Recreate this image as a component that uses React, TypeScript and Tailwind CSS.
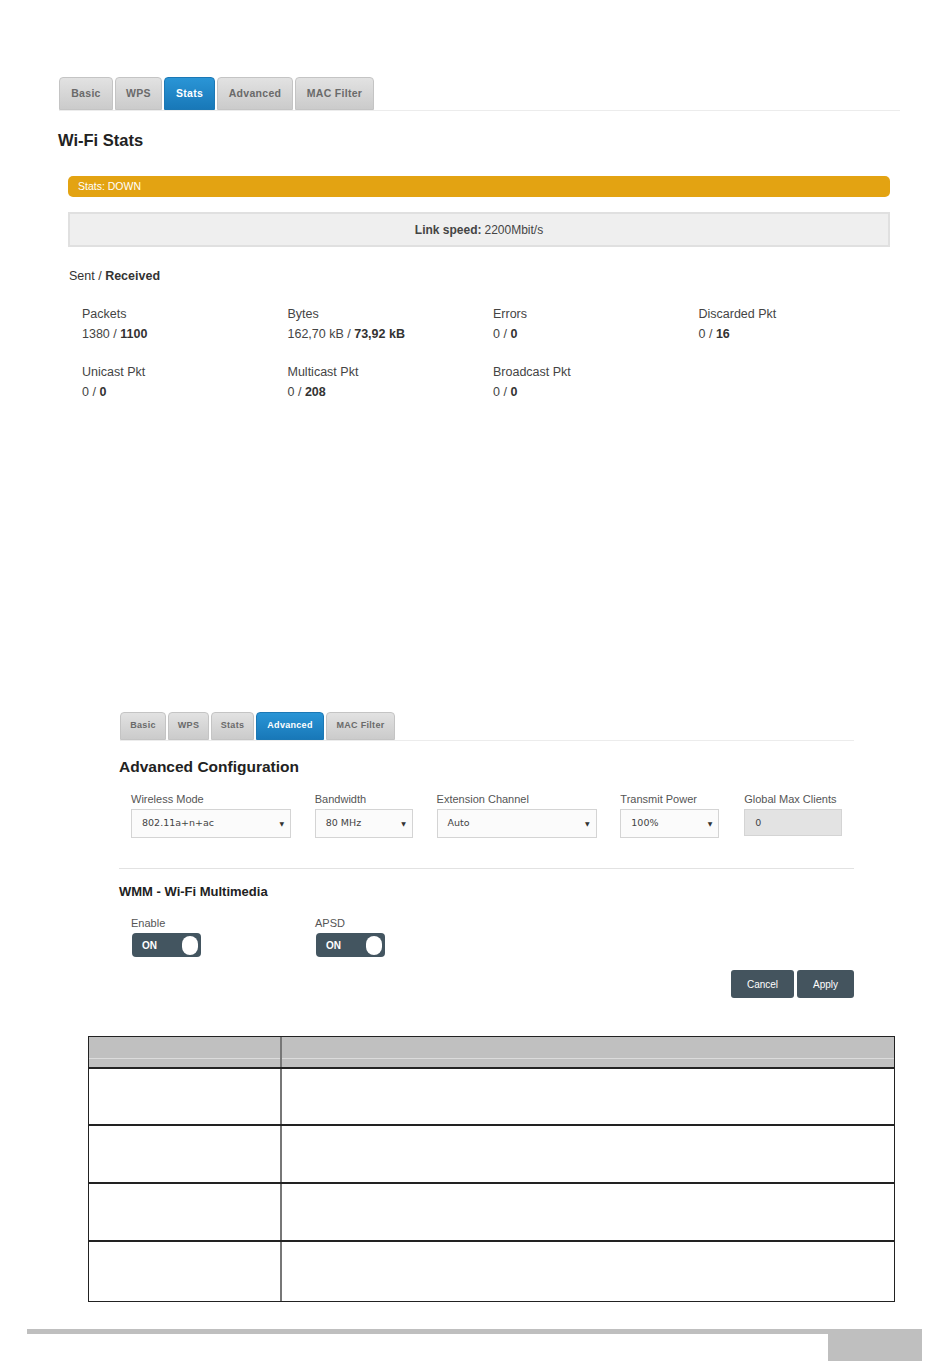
import React from "react";

const font = { fontFamily: '"Liberation Sans", Arial, sans-serif' };

function Tab({ label, active, w, h, size }: { label: string; active?: boolean; w: number; h: string; size: string }) {
  return (
    <div
      style={{ width: w }}
      className={`${h} ${size} flex items-center justify-center rounded-t-[4px] border font-bold tracking-[0.3px] ${
        active
          ? "border-[#1b78b5] bg-gradient-to-b from-[#2a95d6] to-[#1878b8] text-white"
          : "border-[#c4c4c4] bg-gradient-to-b from-[#e2e2e2] to-[#cbcbcb] text-[#6a6a6a]"
      }`}
    >
      {label}
    </div>
  );
}

function Stat({ label, a, b }: { label: string; a: string; b: string }) {
  return (
    <div>
      <div className="h-[14px] text-[12.5px] leading-[14px] text-[#444]">{label}</div>
      <div className="mt-[6px] h-[14px] text-[12.5px] leading-[14px] text-[#444]">
        {a} / <span className="font-bold text-[#333]">{b}</span>
      </div>
    </div>
  );
}

function Select({ value, w, disabled }: { value: string; w: number; disabled?: boolean }) {
  return (
    <div
      style={{ width: w, fontFamily: '"DejaVu Sans", Verdana, sans-serif' }}
      className={`flex justify-between border border-[#d4d4d4] pl-[10px] pr-[6px] text-[9.5px] text-[#444] ${
        disabled ? "bg-[#e3e3e3] h-[27px] items-start pt-[6px]" : "bg-[#fbfbfb] h-[29px] items-center"
      }`}
    >
      <span>{value}</span>
      {!disabled && <span className="text-[6px] text-[#333]">▼</span>}
    </div>
  );
}

function Toggle() {
  return (
    <div className="mt-[4px] ml-px w-[69px] h-[24px] rounded-[4px] bg-[#435560] flex items-center justify-between pl-[10px] pr-[3px]">
      <span className="text-[10px] font-bold text-white">ON</span>
      <span className="w-[16px] h-[19px] rounded-full bg-white" />
    </div>
  );
}

export default function App() {
  return (
    <div style={font} className="w-[950px] h-[1361px] bg-white relative overflow-hidden text-[#333]">
      {/* Section 1 */}
      <div className="pt-[77px] ml-[59px] w-[841px]">
        <div className="h-[34px] flex items-end gap-[2px] border-b border-[#ececec]">
          <Tab label="Basic" w={54} h="h-[33px]" size="text-[10.5px]" />
          <Tab label="WPS" w={47} h="h-[33px]" size="text-[10.5px]" />
          <Tab label="Stats" w={51} h="h-[33px]" size="text-[10.5px]" active />
          <Tab label="Advanced" w={76} h="h-[33px]" size="text-[10.5px]" />
          <Tab label="MAC Filter" w={79} h="h-[33px]" size="text-[10.5px]" />
        </div>
        <div className="mt-[19px] -ml-px h-[20px] text-[16.5px] leading-[20px] font-bold text-[#222]">Wi-Fi Stats</div>
        <div className="mt-[26px] ml-[9px] w-[822px] h-[21px] rounded-[5px] bg-[#e3a312] flex items-center pl-[10px] text-[10.5px] text-white">
          Stats: DOWN
        </div>
        <div className="mt-[15px] ml-[9px] w-[822px] h-[35px] bg-[#efefef] border-2 border-[#e0e0e0] flex items-center justify-center text-[12px] text-[#444]">
          <span className="font-bold mr-[3px]">Link speed:</span>2200Mbit/s
        </div>
        <div className="mt-[22px] ml-[10px] h-[14px] text-[12.5px] leading-[14px] text-[#333]">
          Sent / <span className="font-bold">Received</span>
        </div>
        <div className="ml-[23px] mt-[24px] grid grid-cols-[205.5px_205.5px_205.5px_205.5px] gap-y-[24px]">
          <Stat label="Packets" a="1380" b="1100" />
          <Stat label="Bytes" a="162,70 kB" b="73,92 kB" />
          <Stat label="Errors" a="0" b="0" />
          <Stat label="Discarded Pkt" a="0" b="16" />
          <Stat label="Unicast Pkt" a="0" b="0" />
          <Stat label="Multicast Pkt" a="0" b="208" />
          <Stat label="Broadcast Pkt" a="0" b="0" />
        </div>
      </div>

      {/* Section 2 */}
      <div className="mt-[313px] ml-[120px] w-[734px]">
        <div className="h-[29px] flex items-end gap-[2px] border-b border-[#ececec]">
          <Tab label="Basic" w={46} h="h-[28px]" size="text-[9px]" />
          <Tab label="WPS" w={41} h="h-[28px]" size="text-[9px]" />
          <Tab label="Stats" w={43} h="h-[28px]" size="text-[9px]" />
          <Tab label="Advanced" w={68} h="h-[28px]" size="text-[9px]" active />
          <Tab label="MAC Filter" w={69} h="h-[28px]" size="text-[9px]" />
        </div>
        <div className="mt-[16px] -ml-px h-[20px] text-[15.5px] leading-[20px] font-bold text-[#222]">Advanced Configuration</div>
        <div className="mt-[16px] ml-[11px] flex">
          <div className="w-[184px]">
            <div className="h-[12px] text-[11px] leading-[12px] text-[#555]">Wireless Mode</div>
            <div className="mt-[4px]"><Select value="802.11a+n+ac" w={160} /></div>
          </div>
          <div className="w-[122px]">
            <div className="h-[12px] text-[11px] leading-[12px] text-[#555]">Bandwidth</div>
            <div className="mt-[4px]"><Select value="80 MHz" w={98} /></div>
          </div>
          <div className="w-[184px]">
            <div className="h-[12px] text-[11px] leading-[12px] text-[#555]">Extension Channel</div>
            <div className="mt-[4px]"><Select value="Auto" w={160} /></div>
          </div>
          <div className="w-[124px]">
            <div className="h-[12px] text-[11px] leading-[12px] text-[#555]">Transmit Power</div>
            <div className="mt-[4px]"><Select value="100%" w={99} /></div>
          </div>
          <div className="w-[110px]">
            <div className="h-[12px] text-[11px] leading-[12px] text-[#555]">Global Max Clients</div>
            <div className="mt-[4px]"><Select value="0" w={98} disabled /></div>
          </div>
        </div>
        <div className="mt-[30px] -ml-px h-px bg-[#e2e2e2]" />
        <div className="mt-[16px] -ml-px h-[14px] text-[13px] leading-[14px] font-bold text-[#222]">WMM - Wi-Fi Multimedia</div>
        <div className="mt-[18px] ml-[11px] flex">
          <div className="w-[184px]">
            <div className="h-[12px] text-[11px] leading-[12px] text-[#555]">Enable</div>
            <Toggle />
          </div>
          <div>
            <div className="h-[12px] text-[11px] leading-[12px] text-[#555]">APSD</div>
            <Toggle />
          </div>
        </div>
        <div className="mt-[13px] flex justify-end gap-[3px]">
          <div className="w-[63px] h-[28px] rounded-[3px] bg-[#44545e] flex items-center justify-center text-[10px] text-white">Cancel</div>
          <div className="w-[57px] h-[28px] rounded-[3px] bg-[#44545e] flex items-center justify-center text-[10px] text-white">Apply</div>
        </div>
      </div>

      {/* Table */}
      <div className="mt-[38px] ml-[88px] w-[807px] border border-[#222]">
        <div className="grid grid-cols-[193px_1fr] h-[32px] bg-[#c0c0c0] border-b-2 border-[#222]">
          <div className="border-r-2 border-[#777] flex flex-col justify-end"><div className="h-[1px] mb-[8px] bg-[#dcdcdc]" /></div>
          <div className="flex flex-col justify-end"><div className="h-[1px] mb-[8px] bg-[#dcdcdc]" /></div>
        </div>
        {[57, 58, 58, 59].map((h, i) => (
          <div key={i} style={{ height: h }} className={`grid grid-cols-[193px_1fr] ${i < 3 ? "border-b-2 border-[#222]" : ""}`}>
            <div className="border-r-2 border-[#777]" />
            <div />
          </div>
        ))}
      </div>

      {/* Footer */}
      <div className="mt-[27px] ml-[27px] w-[895px]">
        <div className="h-[5px] bg-[#bfbfbf]" />
        <div className="ml-[801px] w-[94px] h-[30px] bg-[#bfbfbf]" />
      </div>
    </div>
  );
}
